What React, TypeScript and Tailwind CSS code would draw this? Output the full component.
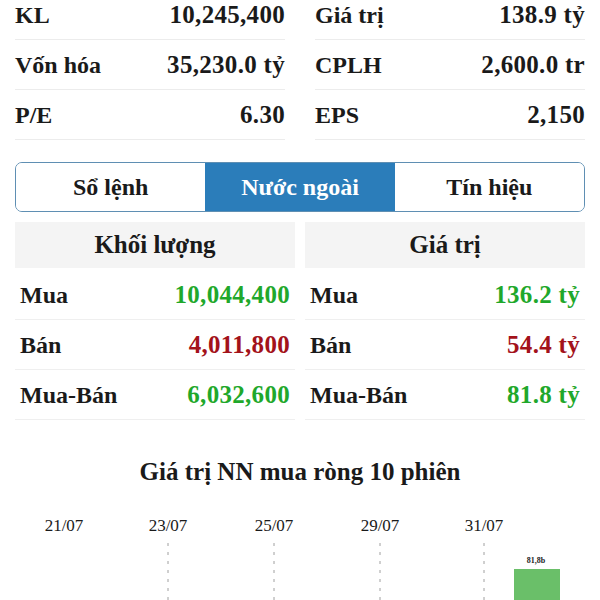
import React from "react";

function TopRow({ l, v }: { l: string; v: string }) {
  return (
    <div className="flex h-[50px] items-center justify-between border-b border-[#ececec] font-bold text-[#1a1a1a]">
      <span className="text-[24px]">{l}</span>
      <span className="text-[25px] tracking-[0.3px]">{v}</span>
    </div>
  );
}

function FRow({ l, v, c }: { l: string; v: string; c: string }) {
  return (
    <div className="flex h-[50px] items-center justify-between border-b border-[#efefef] px-[5px] font-bold">
      <span className="text-[24px] text-[#1a1a1a]">{l}</span>
      <span className={`text-[25px] tracking-[0.3px] ${c}`}>{v}</span>
    </div>
  );
}

const SF = '"Liberation Serif", Tinos, "Times New Roman", "DejaVu Serif", serif';

export default function App() {
  const green = "text-[#1fa82b]";
  const red = "text-[#a3121a]";
  return (
    <div className="h-[600px] w-[600px] overflow-hidden bg-white font-['Liberation_Serif','Tinos','DejaVu_Serif',serif]">
      <div className="-mt-[10px] grid grid-cols-2 gap-x-[30px] px-[15px]">
        <div>
          <TopRow l="KL" v="10,245,400" />
          <TopRow l="Vốn hóa" v="35,230.0 tỷ" />
          <TopRow l="P/E" v="6.30" />
        </div>
        <div>
          <TopRow l="Giá trị" v="138.9 tỷ" />
          <TopRow l="CPLH" v="2,600.0 tr" />
          <TopRow l="EPS" v="2,150" />
        </div>
      </div>

      <div className="mx-[15px] mt-[22px] grid h-[50px] grid-cols-3 overflow-hidden rounded-[7px] border border-[#5f8fb3] text-[24px] font-bold">
        <div className="flex items-center justify-center bg-white text-[#1a1a1a]">Sổ lệnh</div>
        <div className="flex items-center justify-center bg-[#2b7dba] text-white">Nước ngoài</div>
        <div className="flex items-center justify-center bg-white text-[#1a1a1a]">Tín hiệu</div>
      </div>

      <div className="mt-[10px] grid grid-cols-2 gap-x-[10px] px-[15px]">
        <div>
          <div className="mb-[2px] flex h-[46px] items-center justify-center bg-[#f4f4f4] text-[25px] font-bold text-[#1a1a1a]">
            Khối lượng
          </div>
          <FRow l="Mua" v="10,044,400" c={green} />
          <FRow l="Bán" v="4,011,800" c={red} />
          <FRow l="Mua-Bán" v="6,032,600" c={green} />
        </div>
        <div>
          <div className="mb-[2px] flex h-[46px] items-center justify-center bg-[#f4f4f4] text-[25px] font-bold text-[#1a1a1a]">
            Giá trị
          </div>
          <FRow l="Mua" v="136.2 tỷ" c={green} />
          <FRow l="Bán" v="54.4 tỷ" c={red} />
          <FRow l="Mua-Bán" v="81.8 tỷ" c={green} />
        </div>
      </div>

      <div className="mt-[36px] text-center text-[25px] font-bold leading-[32px] text-[#1a1a1a]">
        Giá trị NN mua ròng 10 phiên
      </div>

      <svg width="600" height="100" viewBox="0 0 600 100" className="mt-[13px] block">
        {[
          ["21/07", 64],
          ["23/07", 168],
          ["25/07", 274],
          ["29/07", 380],
          ["31/07", 484],
        ].map(([t, x]) => (
          <text
            key={t as string}
            x={x as number}
            y={30}
            textAnchor="middle"
            fontSize="17"
            fill="#1a1a1a"
            fontFamily={SF}
          >
            {t}
          </text>
        ))}
        {[168, 274, 380, 484].map((x) => (
          <line
            key={x}
            x1={x}
            x2={x}
            y1={42}
            y2={100}
            stroke="#a0a0a0"
            strokeWidth="1"
            strokeDasharray="3 6"
          />
        ))}
        <text
          x={536}
          y={62}
          textAnchor="middle"
          fontSize="8"
          fontWeight="bold"
          fill="#222222"
          fontFamily={SF}
        >
          81,8b
        </text>
        <rect x={514} y={68} width={46} height={40} fill="#6abf69" />
      </svg>
    </div>
  );
}
